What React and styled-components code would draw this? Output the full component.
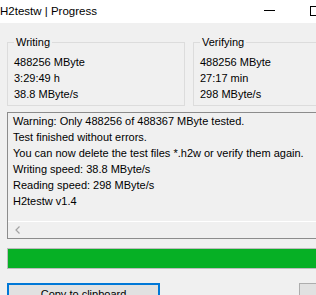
import React from 'react';
import styled, { createGlobalStyle } from 'styled-components';

const GlobalStyle = createGlobalStyle`
  html, body {
    margin: 0;
    padding: 0;
    background: #f0f0f0;
    overflow: hidden;
  }
  body {
    font-family: "Liberation Sans", Arial, sans-serif;
    font-size: 11px;
    color: #000;
  }
`;

const Window = styled.div`
  width: 384px;
  height: 320px;
  background: #f0f0f0;
`;

const TitleBar = styled.div`
  height: 23px;
  background: #fff;
  display: flex;
  align-items: center;
`;

const Title = styled.div`
  flex: 1;
  font-size: 11.5px;
  line-height: 23px;
  color: #000;
  padding-bottom: 1px;
`;

const Controls = styled.div`
  display: flex;
  height: 100%;
`;

const CtrlButton = styled.div`
  width: 46px;
  height: 100%;
  display: flex;
  align-items: center;
  justify-content: center;
  padding-bottom: 2px;
  box-sizing: border-box;
`;

const MinGlyph = styled.div`
  width: 11px;
  height: 1px;
  background: #000;
`;

const MaxGlyph = styled.div`
  width: 8px;
  height: 8px;
  border: 1px solid #000;
`;

const Body = styled.div`
  padding: 12px 0 0 7px;
`;

const Groups = styled.div`
  display: flex;
  gap: 8px;
`;

const Group = styled.fieldset`
  flex: none;
  margin: 0;
  width: ${(p) => p.$width}px;
  box-sizing: border-box;
  border: 1px solid #dcdcdc;
  padding: 5px 6px 3px 6px;
  min-width: 0;
`;

const Legend = styled.legend`
  padding: 0 2px;
  line-height: 14px;
`;

const Value = styled.div`
  line-height: 16px;
  white-space: nowrap;
`;

const Log = styled.div`
  margin-top: 6px;
  border: 1px solid #8c8c8c;
  background: #f0f0f0;
  width: 360px;
`;

const LogText = styled.div`
  height: 108px;
  padding: 0 0 0 5px;
  line-height: 16px;
  white-space: pre;
  overflow: hidden;
`;

const HScroll = styled.div`
  height: 17px;
  border-top: 1px solid #fff;
  box-sizing: border-box;
  display: flex;
  align-items: center;
  padding-left: 7px;
`;

const Progress = styled.div`
  margin-top: 9px;
  height: 21px;
  border: 1px solid #bcbcbc;
  background: #e6e6e6;
  box-sizing: border-box;
  width: 360px;
`;

const Fill = styled.div`
  height: 100%;
  background: #06b025;
`;

const Buttons = styled.div`
  margin-top: 14px;
  display: flex;
  gap: 139px;
`;

const Button = styled.div`
  flex: none;
  width: ${(p) => p.$width}px;
  height: 23px;
  box-sizing: border-box;
  background: #e1e1e1;
  border: 1px solid ${(p) => (p.$default ? '#0078d7' : '#adadad')};
  box-shadow: ${(p) => (p.$default ? 'inset 0 0 0 1px #0078d7' : 'none')};
  display: flex;
  align-items: center;
  justify-content: center;
  line-height: 13px;
`;

const logLines = [
  'Warning: Only 488256 of 488367 MByte tested.',
  'Test finished without errors.',
  'You can now delete the test files *.h2w or verify them again.',
  'Writing speed: 38.8 MByte/s',
  'Reading speed: 298 MByte/s',
  'H2testw v1.4',
];

const stats = [
  { title: 'Writing', width: 178, rows: ['488256 MByte', '3:29:49 h', '38.8 MByte/s'] },
  { title: 'Verifying', width: 190, rows: ['488256 MByte', '27:17 min', '298 MByte/s'] },
];

function ArrowLeft() {
  return (
    <svg width="6" height="8" viewBox="0 0 6 8">
      <path d="M4.5 0.5 L1 4 L4.5 7.5" fill="none" stroke="#a3a3a3" strokeWidth="1.2" />
    </svg>
  );
}

export default function App() {
  return (
    <Window>
      <GlobalStyle />
      <TitleBar>
        <Title>H2testw | Progress</Title>
        <Controls>
          <CtrlButton><MinGlyph /></CtrlButton>
          <CtrlButton><MaxGlyph /></CtrlButton>
          <CtrlButton />
        </Controls>
      </TitleBar>
      <Body>
        <Groups>
          {stats.map((s) => (
            <Group key={s.title} $width={s.width}>
              <Legend>{s.title}</Legend>
              {s.rows.map((r) => (
                <Value key={r}>{r}</Value>
              ))}
            </Group>
          ))}
        </Groups>
        <Log>
          <LogText>{logLines.join('\n')}</LogText>
          <HScroll><ArrowLeft /></HScroll>
        </Log>
        <Progress>
          <Fill style={{ width: '100%' }} />
        </Progress>
        <Buttons>
          <Button $default $width={153}>Copy to clipboard</Button>
          <Button $width={75}>Close</Button>
        </Buttons>
      </Body>
    </Window>
  );
}
